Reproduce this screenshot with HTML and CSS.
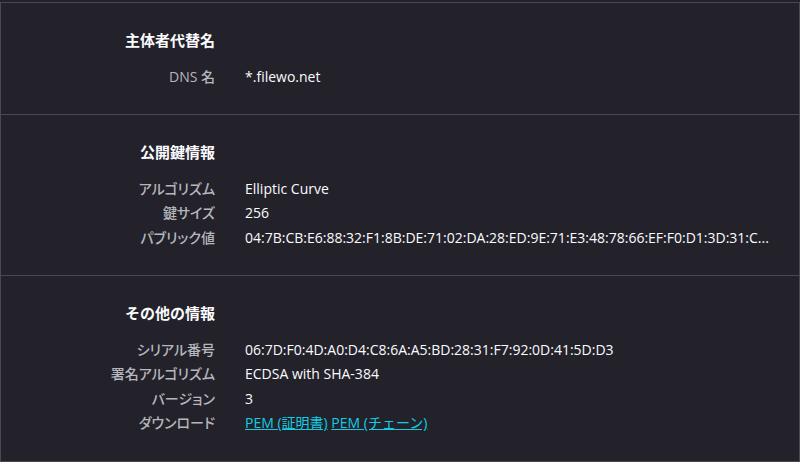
FILE: index.html
```html
<!DOCTYPE html>
<html lang="ja">
<head>
<meta charset="utf-8">
<title>証明書</title>
<link rel="stylesheet" href="styles.css">
</head>
<body>
<div class="cert">
  <section class="info-group">
    <div class="grid">
      <h2 class="group-title">主体者代替名</h2>
      <span class="spacer"></span>
      <div class="label">DNS 名</div>
      <div class="value">*.filewo.net</div>
    </div>
  </section>
  <section class="info-group">
    <div class="grid">
      <h2 class="group-title">公開鍵情報</h2>
      <span class="spacer"></span>
      <div class="label">アルゴリズム</div>
      <div class="value">Elliptic Curve</div>
      <div class="label">鍵サイズ</div>
      <div class="value">256</div>
      <div class="label">パブリック値</div>
      <div class="value trunc">04:7B:CB:E6:88:32:F1:8B:DE:71:02:DA:28:ED:9E:71:E3:48:78:66:EF:F0:D1:3D:31:C...</div>
    </div>
  </section>
  <section class="info-group last">
    <div class="grid">
      <h2 class="group-title">その他の情報</h2>
      <span class="spacer"></span>
      <div class="label">シリアル番号</div>
      <div class="value">06:7D:F0:4D:A0:D4:C8:6A:A5:BD:28:31:F7:92:0D:41:5D:D3</div>
      <div class="label">署名アルゴリズム</div>
      <div class="value">ECDSA with SHA-384</div>
      <div class="label">バージョン</div>
      <div class="value">3</div>
      <div class="label">ダウンロード</div>
      <div class="value"><a href="#">PEM (証明書)</a> <a href="#">PEM (チェーン)</a></div>
    </div>
  </section>
</div>
</body>
</html>
```
FILE: styles.css
```css
html, body {
  margin: 0;
  padding: 0;
  background: #23222b;
}
body {
  font-family: "Open Sans", "Noto Sans CJK JP", sans-serif;
  font-size: 14px;
  color: #fbfbfe;
  padding-top: 2px;
  overflow: hidden;
}
.cert {
  border-left: 1px solid #4a4952;
  border-right: 1px solid #4a4952;
  border-bottom: 1px solid #4a4952;
}
.info-group {
  border-top: 1px solid #4a4952;
  padding: 25px 0 25px;
}
.grid {
  display: grid;
  grid-template-columns: 214px 1fr;
  column-gap: 30px;
  line-height: 24.5px;
}
.group-title {
  margin: 0 0 12px;
  font-size: 15px;
  font-weight: 700;
  color: #fbfbfe;
  text-align: right;
  line-height: 24.5px;
}
.spacer { display: block; }
.label {
  text-align: right;
  color: #b6b6bd;
  font-weight: 500;
  white-space: nowrap;
  font-feature-settings: "palt";
}
.value {
  white-space: nowrap;
  padding-right: 30px;
}
.trunc {
  overflow: hidden;
  text-overflow: ellipsis;
}
a {
  color: #11cde4;
  text-decoration: underline;
}
```
